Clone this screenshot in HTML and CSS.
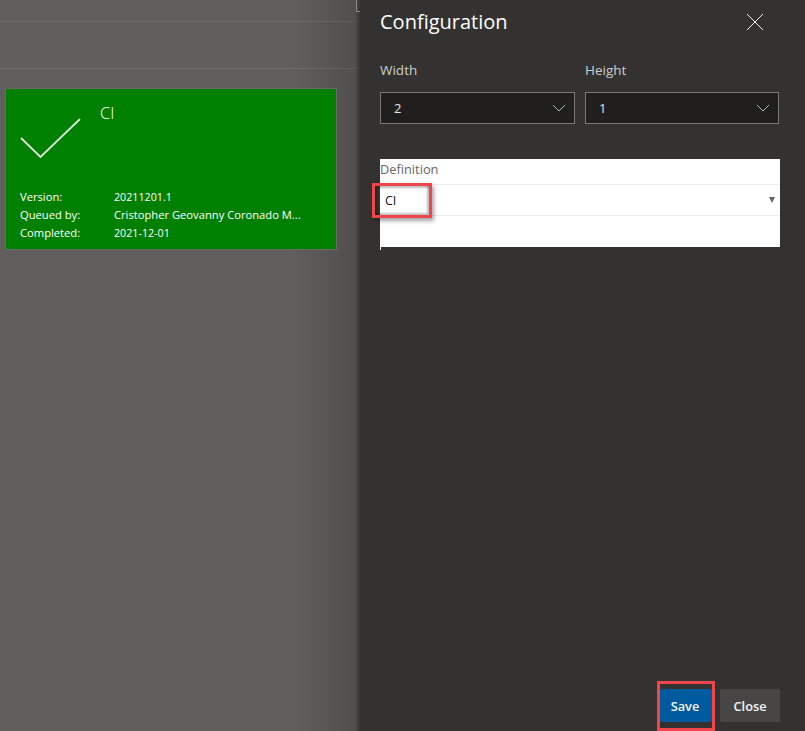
FILE: index.html
```html
<!DOCTYPE html>
<html lang="en">
<head>
<meta charset="utf-8">
<title>Configuration</title>
<link rel="stylesheet" href="styles.css">
</head>
<body>
<div class="page">
  <div class="backdrop">
    <div class="bar bar-top"></div>
    <div class="bar bar-second"></div>
    <div class="shade"></div>
    <div class="tile">
      <div class="tile-head">
        <svg class="tick" width="62" height="44" viewBox="0 0 62 44"><path d="M1 20 L20.500 39 L60 1" fill="none" stroke="#dfe9da" stroke-width="1.800"/></svg>
        <div class="tile-name">CI</div>
      </div>
      <dl class="facts">
        <dt>Version:</dt><dd class="num">20211201.1</dd>
        <dt>Queued by:</dt><dd>Cristopher Geovanny Coronado M...</dd>
        <dt>Completed:</dt><dd class="num">2021-12-01</dd>
      </dl>
    </div>
    <div class="stub"></div>
  </div>
  <aside class="panel">
    <header class="panel-head">
      <h1>Configuration</h1>
      <svg class="close-x" width="18" height="18" viewBox="0 0 18 18"><path d="M1 1 L17 17 M17 1 L1 17" stroke="#f0f0f0" stroke-width="1" fill="none"/></svg>
    </header>
    <div class="sizes">
      <div class="field field-width">
        <label>Width</label>
        <div class="select"><span>2</span><svg width="14" height="8" viewBox="0 0 14 8"><path d="M1 1 L7 7 L13 1" stroke="#9fc4a4" fill="none"/></svg></div>
      </div>
      <div class="field field-height">
        <label>Height</label>
        <div class="select"><span>1</span><svg width="14" height="8" viewBox="0 0 14 8"><path d="M1 1 L7 7 L13 1" stroke="#9fc4a4" fill="none"/></svg></div>
      </div>
    </div>
    <div class="definition">
      <div class="def-label">Definition</div>
      <div class="def-row">
        <span class="def-value">CI</span>
        <span class="def-arrow"></span>
        <span class="callout callout-ci"></span>
      </div>
    </div>
    <div class="def-tick"></div>
    <footer class="actions">
      <button class="btn btn-save">Save<span class="callout callout-save"></span></button>
      <button class="btn btn-close">Close</button>
    </footer>
  </aside>
</div>
</body>
</html>
```

FILE: styles.css
```css
* { box-sizing: border-box; }
html, body { margin: 0; padding: 0; height: 100%; }
body { background: #605f5d; font-family: "Open Sans", "Noto Sans", "Liberation Sans", sans-serif; overflow: hidden; }
.page { display: flex; width: 805px; height: 731px; }

.backdrop { position: relative; width: 360px; flex: none; background: #605f5d; padding-top: 21px; }
.bar { height: 1px; background: #6f6e6c; }
.bar-second { margin-top: 46px; }
.shade { position: absolute; top: 0; right: 0; bottom: 0; width: 67px; background: linear-gradient(to right, rgba(51,50,49,0) 0%, rgba(51,50,49,.35) 92%, rgba(51,50,49,.6) 96%, rgba(51,50,49,1) 100%); }
.stub { position: absolute; top: 0; left: 356px; width: 4px; height: 12px; border: 1px solid #8a8987; border-top: 0; border-right: 0; }

.tile { position: relative; width: 330px; height: 160px; margin: 20px 0 0 6px; background: #008000; color: #fff; box-shadow: 0 0 0 1px #676a65; padding: 0 14px; display: flex; flex-direction: column; justify-content: space-between; }
.tile-head { display: flex; align-items: flex-start; }
.tick { margin: 29px 0 0 0; flex: none; }
.tile-name { margin: 12px 0 0 18px; font-size: 16.500px; line-height: 24px; font-weight: 300; }
.facts { display: grid; grid-template-columns: 94px 1fr; margin: 0 0 7px; font-size: 11.200px; line-height: 18px; }
.facts dt, .facts dd { margin: 0; white-space: nowrap; }
.facts .num { font-size: 10.700px; }

.panel { flex: 1; background: #333231; padding: 0 25px 0 20px; display: flex; flex-direction: column; color: #f4f4f4; }
.panel-head { display: flex; justify-content: space-between; align-items: center; height: 44px; padding-right: 16px; }
.panel-head h1 { margin: 0; font-size: 20px; line-height: 44px; font-weight: 400; color: #fff; }
.close-x { flex: none; }

.sizes { display: flex; gap: 10px; margin-top: 15px; }
.field-width { width: 195px; }
.field-height { width: 194px; }
.field label { display: block; font-size: 13.500px; line-height: 22px; color: #cfcecd; margin-bottom: 11px; }
.select { height: 32px; background: #201f1e; border: 1px solid #7b7a78; display: flex; align-items: center; justify-content: space-between; padding: 0 8px 0 13px; font-size: 13px; color: #e6e6e6; }
.select svg { flex: none; }

.definition { margin-top: 35px; width: 400px; height: 88px; background: #fff; }
.def-label { height: 25px; font-size: 12.800px; line-height: 21px; color: #666; }
.def-row { position: relative; height: 32px; border-top: 1px solid #ececec; border-bottom: 1px solid #ececec; padding-left: 5px; display: flex; align-items: center; justify-content: space-between; padding-right: 5px; font-size: 12.500px; color: #111; }
.def-arrow { width: 0; height: 0; border-left: 3.500px solid transparent; border-right: 3.500px solid transparent; border-top: 6px solid #666; }
.callout { position: absolute; border: 3px solid #f0454a; pointer-events: none; }
.callout-ci { left: -8px; top: -2px; width: 60px; height: 35px; box-shadow: 2px 3px 4px rgba(0,0,0,.35), inset -2px -2px 2px rgba(0,0,0,.25), inset 2px 2px 2px rgba(0,0,0,.25); }
.def-tick { width: 1px; height: 3px; background: #fff; }

.actions { margin-top: auto; display: flex; justify-content: flex-end; gap: 8px; padding-bottom: 9px; }
.btn { position: relative; height: 33px; border: 0; border-radius: 2px; font: 600 12.800px "Open Sans", "Noto Sans", "Liberation Sans", sans-serif; color: #f4f4f4; padding: 0; }
.btn-save { width: 52px; background: #005a9e; padding-right: 2px; }
.btn-close { width: 60px; background: #484644; }
.callout-save { left: -3px; top: -8px; width: 58px; height: 50px; }
```
